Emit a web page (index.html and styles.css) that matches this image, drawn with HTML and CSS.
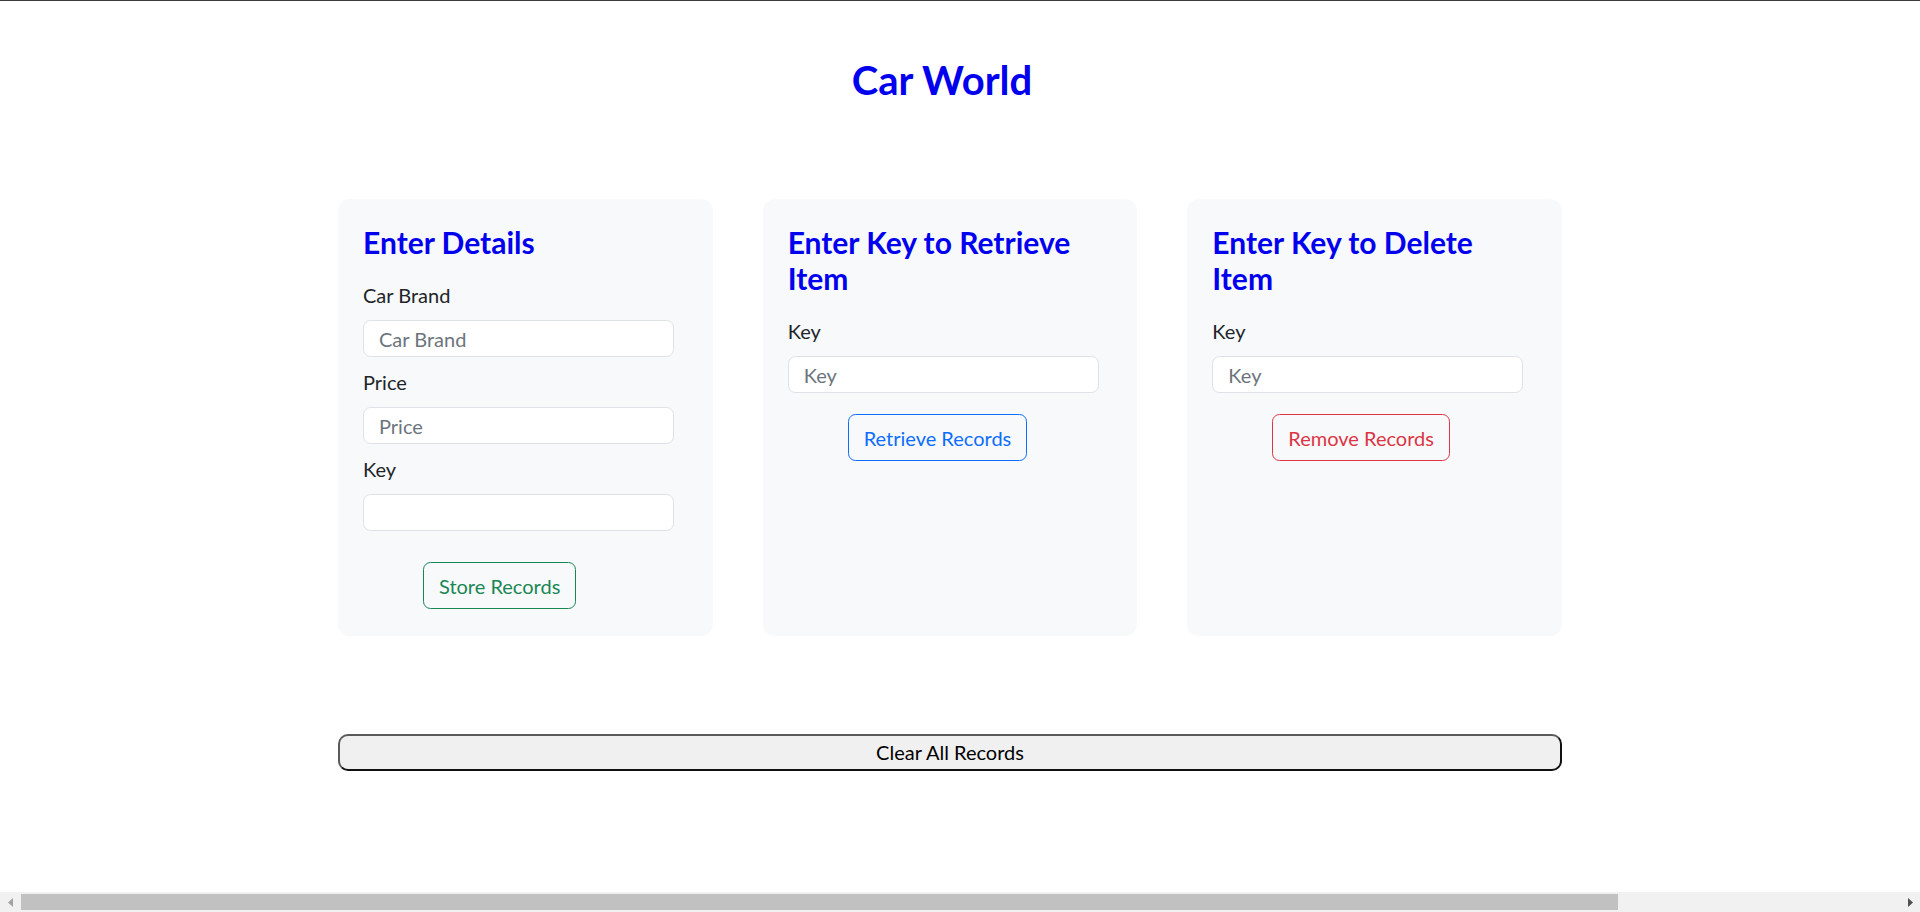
FILE: index.html
```
<!DOCTYPE html>
<html lang="en">
<head>
<meta charset="utf-8">
<title>Car World</title>
<link rel="stylesheet" href="styles.css">
</head>
<body>
<div class="topline"></div>
<main class="page">
  <h2 class="title">Car World</h2>
  <div class="cards">
    <section class="card">
      <h4 class="card-title">Enter Details</h4>
      <label class="label">Car Brand</label>
      <input class="field field-gap" type="text" placeholder="Car Brand">
      <label class="label">Price</label>
      <input class="field field-gap" type="text" placeholder="Price">
      <label class="label">Key</label>
      <input class="field" type="text">
      <button class="btn btn-green btn-first">Store Records</button>
    </section>
    <section class="card">
      <h4 class="card-title">Enter Key to Retrieve Item</h4>
      <label class="label">Key</label>
      <input class="field" type="text" placeholder="Key">
      <button class="btn btn-blue">Retrieve Records</button>
    </section>
    <section class="card">
      <h4 class="card-title">Enter Key to Delete Item</h4>
      <label class="label">Key</label>
      <input class="field" type="text" placeholder="Key">
      <button class="btn btn-red">Remove Records</button>
    </section>
  </div>
  <button class="clear-btn">Clear All Records</button>
</main>
<div class="hscroll">
  <div class="arrow arrow-left">
    <svg width="6" height="9" viewBox="0 0 6 9"><path d="M5 0 L0 4.5 L5 9 Z" fill="#a3a3a3"/></svg>
  </div>
  <div class="track"><div class="thumb"></div></div>
  <div class="arrow arrow-right">
    <svg width="6" height="9" viewBox="0 0 6 9"><path d="M1 0 L6 4.5 L1 9 Z" fill="#505050"/></svg>
  </div>
</div>
</body>
</html>
```

FILE: styles.css
```
html, body {
  margin: 0;
  padding: 0;
  background: #ffffff;
}

body {
  font-family: Lato, "Open Sans", sans-serif;
  font-size: 20px;
  line-height: 30px;
  color: #212529;
}

.topline {
  height: 1px;
  background: #3c3c3c;
}

.page {
  width: 1224px;
  padding-left: 338px;
}

.title {
  width: 1208px;
  margin: 54.7px 0 0;
  font-size: 40px;
  line-height: 48px;
  font-weight: 700;
  text-align: center;
  color: #0000ee;
}

.cards {
  display: flex;
  gap: 50px;
  margin-top: 95.6px;
}

.card {
  box-sizing: border-box;
  width: 375px;
  padding: 25px 25px 27px;
  background: #f8f9fa;
  border-radius: 12px;
  display: flex;
  flex-direction: column;
  align-items: flex-start;
}

.card-title {
  margin: 0 0 20px;
  font-size: 30px;
  line-height: 36px;
  font-weight: 700;
  color: #0000ee;
}

.label {
  display: block;
  margin-bottom: 10px;
}

.field {
  box-sizing: border-box;
  width: 311px;
  height: 37px;
  padding: 0 15px;
  margin: 0;
  border: 1px solid #dee2e6;
  border-radius: 7.5px;
  background: #ffffff;
  font-family: inherit;
  font-size: 20px;
  color: #212529;
  outline: none;
}

.field::placeholder {
  color: #6c757d;
}

.field-gap {
  margin-bottom: 10px;
}

.btn {
  margin: 21px 0 0 60px;
  padding: 7.25px 15px;
  font-family: inherit;
  font-size: 20px;
  line-height: 30px;
  background: transparent;
  border: 1px solid;
  border-radius: 7.5px;
  cursor: pointer;
}

.btn-first {
  margin-top: 31px;
}

.btn-green {
  color: #198754;
  border-color: #198754;
}

.btn-blue {
  color: #0d6efd;
  border-color: #0d6efd;
}

.btn-red {
  color: #dc3545;
  border-color: #dc3545;
}

.clear-btn {
  display: block;
  box-sizing: border-box;
  width: 1224px;
  height: 37px;
  margin-top: 98px;
  padding: 0;
  font-family: inherit;
  font-size: 20px;
  line-height: 26px;
  color: #000000;
  background: #f0f0f0;
  border: 2px solid;
  border-color: #5a5a5a #111111 #111111 #5a5a5a;
  border-radius: 10px;
}

.hscroll {
  position: fixed;
  left: 0;
  right: 0;
  bottom: 0;
  height: 20px;
  background: #f1f1f1;
  display: flex;
}

.arrow {
  width: 21px;
  display: flex;
  align-items: center;
  justify-content: center;
}

.track {
  flex: 1;
  padding: 2px 0;
  box-sizing: border-box;
}

.thumb {
  width: 1597px;
  height: 16px;
  background: #c1c1c1;
}
```
